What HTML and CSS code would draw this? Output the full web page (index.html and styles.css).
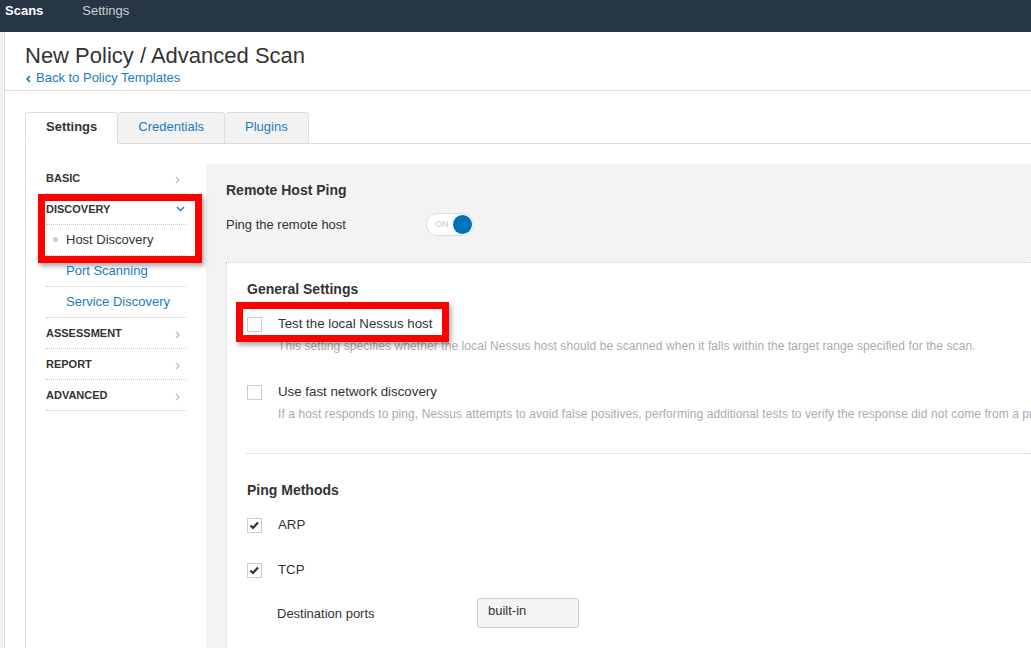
FILE: index.html
```html
<!DOCTYPE html>
<html lang="en">
<head>
<meta charset="utf-8">
<title>New Policy / Advanced Scan</title>
<link rel="stylesheet" href="styles.css">
</head>
<body>
<div class="topbar">
  <span class="top-link active">Scans</span>
  <span class="top-link">Settings</span>
</div>
<div class="layout">
  <div class="strip"></div>
  <div class="page">
    <header class="page-header">
      <h1>New Policy / Advanced Scan</h1>
      <a class="back" href="#"><svg class="back-chev" width="5" height="8" viewBox="0 0 5 8"><polyline points="4,1 1.2,4 4,7" fill="none" stroke="#1a7cc1" stroke-width="1.8"/></svg>Back to Policy Templates</a>
    </header>
    <div class="editor">
      <div class="tabs">
        <div class="tab active">Settings</div>
        <div class="tab">Credentials</div>
        <div class="tab">Plugins</div>
      </div>
      <div class="tab-panel">
        <nav class="side-nav">
          <div class="nav-row nav-head">BASIC<svg class="chev" width="5" height="8" viewBox="0 0 5 8"><polyline points="1,1 4,4 1,7" fill="none" stroke="#bbb" stroke-width="1.2"/></svg></div>
          <div class="annot-wrap">
            <div class="nav-row nav-head">DISCOVERY<svg class="chev-down" width="9" height="6" viewBox="0 0 9 6"><polyline points="1,1 4.5,4.5 8,1" fill="none" stroke="#2a8ab8" stroke-width="1.6"/></svg></div>
            <div class="nav-row nav-sub current">Host Discovery</div>
            <div class="annot annot-nav"></div>
          </div>
          <div class="nav-row nav-sub">Port Scanning</div>
          <div class="nav-row nav-sub">Service Discovery</div>
          <div class="nav-row nav-head">ASSESSMENT<svg class="chev" width="5" height="8" viewBox="0 0 5 8"><polyline points="1,1 4,4 1,7" fill="none" stroke="#bbb" stroke-width="1.2"/></svg></div>
          <div class="nav-row nav-head">REPORT<svg class="chev" width="5" height="8" viewBox="0 0 5 8"><polyline points="1,1 4,4 1,7" fill="none" stroke="#bbb" stroke-width="1.2"/></svg></div>
          <div class="nav-row nav-head">ADVANCED<svg class="chev" width="5" height="8" viewBox="0 0 5 8"><polyline points="1,1 4,4 1,7" fill="none" stroke="#bbb" stroke-width="1.2"/></svg></div>
        </nav>
        <section class="content">
          <h3 class="sec">Remote Host Ping</h3>
          <div class="field-row">
            <span class="field-label">Ping the remote host</span>
            <span class="toggle"><span class="toggle-text">ON</span><span class="knob"></span></span>
          </div>
          <div class="panel">
            <h3 class="sec">General Settings</h3>
            <div class="option">
              <div class="opt-head">
                <span class="checkbox"></span>
                <span class="opt-label">Test the local Nessus host</span>
                <div class="annot annot-opt"></div>
              </div>
              <div class="desc">This setting specifies whether the local Nessus host should be scanned when it falls within the target range specified for the scan.</div>
            </div>
            <div class="option option-spaced">
              <div class="opt-head">
                <span class="checkbox"></span>
                <span class="opt-label">Use fast network discovery</span>
              </div>
              <div class="desc">If a host responds to ping, Nessus attempts to avoid false positives, performing additional tests to verify the response did not come from a proxy or load balancer.</div>
            </div>
            <div class="divider"></div>
            <h3 class="sec sec-spaced">Ping Methods</h3>
            <div class="option option-first">
              <div class="opt-head">
                <span class="checkbox checked"><svg width="13" height="13" viewBox="0 0 13 13"><polyline points="2.5,6.5 5,9 10,3.5" fill="none" stroke="#333" stroke-width="2.2"/></svg></span>
                <span class="opt-label">ARP</span>
              </div>
            </div>
            <div class="option option-check">
              <div class="opt-head">
                <span class="checkbox checked"><svg width="13" height="13" viewBox="0 0 13 13"><polyline points="2.5,6.5 5,9 10,3.5" fill="none" stroke="#333" stroke-width="2.2"/></svg></span>
                <span class="opt-label">TCP</span>
              </div>
            </div>
            <div class="input-row">
              <span class="input-label">Destination ports</span>
              <span class="text-input">built-in</span>
            </div>
          </div>
        </section>
      </div>
    </div>
  </div>
</div>
</body>
</html>
```
FILE: styles.css
```css
html, body {
  margin: 0;
  height: 100%;
  overflow: hidden;
}

body {
  font-family: "Liberation Sans", Arial, sans-serif;
  font-size: 13px;
  color: #333;
  background: #fff;
}

.topbar {
  height: 32px;
  background: #263645;
  display: flex;
  align-items: flex-start;
  padding-left: 5px;
  box-sizing: border-box;
}

.top-link {
  font-size: 13px;
  line-height: 21px;
  color: #c9d0d6;
}

.top-link.active {
  color: #fff;
  font-weight: bold;
}

.top-link + .top-link {
  margin-left: 39px;
}

.layout {
  display: flex;
  height: calc(100% - 32px);
}

.strip {
  flex: none;
  width: 4px;
  background: #f2f2f2;
  border-right: 1px solid #dcdcdc;
}

.page {
  flex: 1;
  min-width: 0;
  display: flex;
  flex-direction: column;
}

.page-header {
  padding: 11px 20px 4px;
  border-bottom: 1px solid #ddd;
}

h1 {
  margin: 0;
  font-size: 22px;
  line-height: 26px;
  font-weight: normal;
  color: #333;
}

.back {
  display: flex;
  align-items: center;
  margin-top: 1px;
  line-height: 16px;
  color: #1a7cc1;
  text-decoration: none;
}

.back-chev {
  margin: 1px 5px 0 1px;
}

.editor {
  flex: 1;
  min-height: 0;
  margin: 21px 0 0 20px;
  display: flex;
  flex-direction: column;
}

.tabs {
  display: flex;
  border-bottom: 1px solid #ddd;
}

.tab {
  padding: 3px 20px 5px;
  line-height: 22px;
  border: 1px solid #ddd;
  border-radius: 3px 3px 0 0;
  margin-bottom: -1px;
  background: #f2f2f2;
  color: #1a7cc1;
}

.tab + .tab {
  border-left: none;
}

.tab.active {
  background: #fff;
  border-bottom-color: #fff;
  color: #333;
  font-weight: bold;
}

.tab-panel {
  flex: 1;
  min-height: 0;
  display: flex;
  gap: 20px;
  padding: 20px 0 0 20px;
  border-left: 1px solid #ddd;
}

.side-nav {
  flex: none;
  width: 140px;
  margin-top: -1px;
}

.nav-row {
  height: 30px;
  display: flex;
  align-items: center;
  justify-content: space-between;
  border-bottom: 1px dotted #c8c8c8;
}

.nav-head {
  font-size: 11px;
  font-weight: bold;
  color: #333;
}

.chev {
  margin: 3px 6px 0 0;
}

.chev-down {
  margin: 0 1px 0 0;
}

.nav-sub {
  position: relative;
  padding-left: 20px;
  padding-bottom: 1px;
  height: 29px;
  font-size: 13px;
  color: #1a7cc1;
}

.nav-sub.current {
  color: #333;
}

.nav-sub.current::before {
  content: "";
  position: absolute;
  left: 7px;
  top: 12px;
  width: 5px;
  height: 5px;
  border-radius: 50%;
  background: #ccc;
}

.annot-wrap {
  position: relative;
}

.annot {
  position: absolute;
  box-sizing: border-box;
  border: 7px solid #f00;
  box-shadow: 2px 3px 5px rgba(0, 0, 0, 0.35);
  pointer-events: none;
}

.annot-nav {
  left: -8px;
  top: 0;
  width: 164px;
  height: 69px;
}

.annot-opt {
  left: -11px;
  top: -13px;
  width: 213px;
  height: 40px;
}

.content {
  flex: 1;
  min-width: 0;
  display: flex;
  flex-direction: column;
  background: #f3f3f3;
  padding: 16px 0 0 20px;
}

.sec {
  margin: 0;
  font-size: 14px;
  line-height: 20px;
  font-weight: bold;
  color: #333;
}

.sec-spaced {
  margin-top: 26px;
}

.field-row {
  display: flex;
  align-items: center;
  height: 24px;
  margin-top: 12px;
}

.field-label {
  width: 200px;
}

.toggle {
  box-sizing: border-box;
  width: 48px;
  height: 23px;
  border: 1px solid #ddd;
  border-radius: 12px;
  background: #fff;
  display: flex;
  align-items: center;
  justify-content: space-between;
  padding: 0 1px 0 8px;
}

.toggle-text {
  font-size: 9px;
  color: #c8c8c8;
}

.knob {
  width: 19px;
  height: 19px;
  border-radius: 50%;
  background: #0071bc;
}

.panel {
  flex: 1;
  margin-top: 26px;
  background: #fff;
  border-top: 1px dotted #ccc;
  border-left: 1px dotted #ccc;
  padding: 16px 0 0 20px;
}

.option {
  margin-top: 16px;
}

.option-first {
  margin-top: 16px;
}

.option-spaced {
  margin-top: 29px;
}

.option-check {
  margin-top: 27px;
}

.opt-head {
  position: relative;
  display: flex;
  align-items: flex-start;
  line-height: 18px;
  font-size: 13.3px;
}

.checkbox {
  flex: none;
  box-sizing: border-box;
  width: 15px;
  height: 15px;
  margin: 2px 16px 0 0;
  border: 1px solid #ccc;
  background: #fff;
  display: flex;
  align-items: center;
  justify-content: center;
}

.desc {
  margin: 5px 0 0 31px;
  font-size: 12px;
  letter-spacing: 0.08px;
  line-height: 16px;
  color: #ababab;
  white-space: nowrap;
}

.divider {
  margin-top: 31px;
  border-top: 1px dotted #ccc;
}

.input-row {
  display: flex;
  align-items: center;
  margin-top: 19px;
}

.input-label {
  width: 200px;
  margin-left: 30px;
}

.text-input {
  box-sizing: border-box;
  width: 102px;
  height: 30px;
  padding: 3px 10px 0;
  line-height: 18px;
  border: 1px solid #ccc;
  border-radius: 3px;
  background: #f4f4f4;
  color: #333;
}
```
